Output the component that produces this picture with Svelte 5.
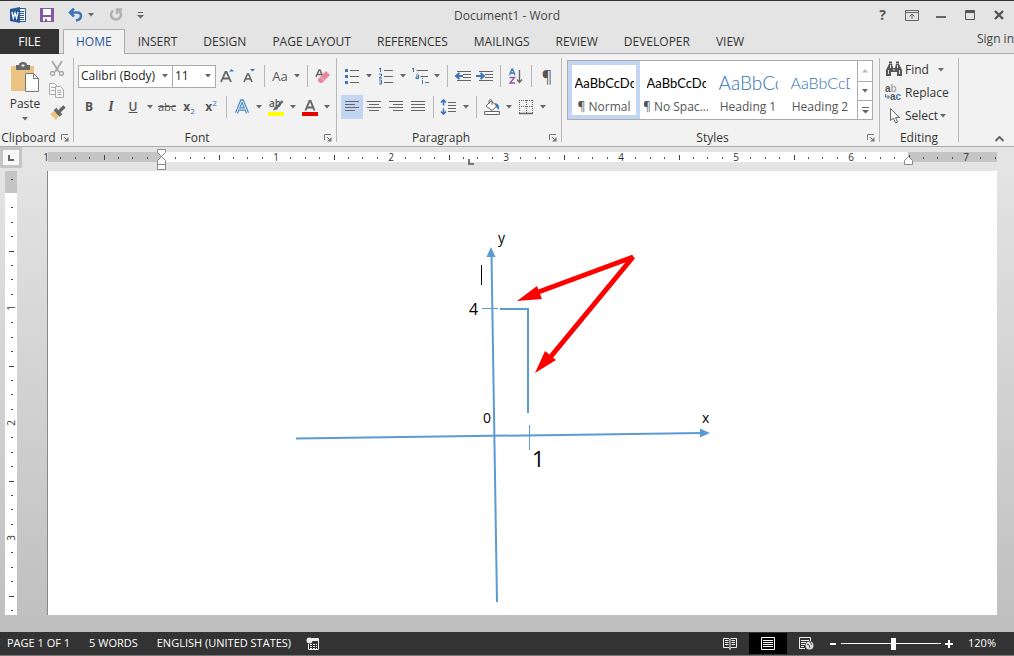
<script lang="ts">
	const tabs = [
		'INSERT',
		'DESIGN',
		'PAGE LAYOUT',
		'REFERENCES',
		'MAILINGS',
		'REVIEW',
		'DEVELOPER',
		'VIEW',
	];

	const styles = [
		{ name: '¶ Normal', sample: 'AaBbCcDc', kind: 'body' },
		{ name: '¶ No Spac...', sample: 'AaBbCcDc', kind: 'body' },
		{ name: 'Heading 1', sample: 'AaBbCc', kind: 'h1' },
		{ name: 'Heading 2', sample: 'AaBbCcD', kind: 'h2' },
	];

	let activeTab = $state('HOME');
	let activeStyle = $state('¶ Normal');
	let align = $state('left');
	let zoom = $state(53);

	// one inch on the ruler at 120% zoom, split in eighths
	const inch = 115;

	function ticks(from: number, to: number) {
		const list: Array<{ pos: number; kind: string; label: string }> = [];
		for (let i = from; i <= to; i++) {
			if (i === 0) continue;
			const kind = i % 8 === 0 ? 'number' : i % 4 === 0 ? 'half' : 'dot';
			list.push({ pos: Math.round((i * inch) / 8), kind, label: String(Math.abs(i / 8)) });
		}
		return list;
	}

	const hTicks = ticks(-8, 58);
	const vTicks = ticks(-1, 29);
</script>

{#snippet caret()}
	<svg class="caret" width="6" height="4" viewBox="0 0 6 4"><path d="M0 0h6L3 3.5z" fill="#666" /></svg>
{/snippet}

{#snippet drop(label: string)}
	<button class="drop" aria-label={label}>{@render caret()}</button>
{/snippet}

{#snippet groupLabel(label: string, launcher: boolean)}
	<div class="group-label">
		<span>{label}</span>
		{#if launcher}
			<button class="launcher" aria-label="{label} settings">
				<svg width="8" height="8" viewBox="0 0 8 8" fill="none" stroke="#777">
					<path d="M.5 6V.5H7M3 3l3 3" />
					<path d="M7.5 3v4.500H3z" fill="#777" stroke="none" />
				</svg>
			</button>
		{/if}
	</div>
{/snippet}

{#snippet icon(name: string)}
	<svg width="18" height="18" viewBox="0 0 18 18" fill="none" stroke="#666" aria-hidden="true">
		{#if name === 'grow'}
			<path d="M3 15L7.500 5h1L13 15M5 11.500h6" stroke-width="1.800" />
			<path d="M11 4.500h5L13.500 2z" fill="#3f73b5" stroke="none" />
		{:else if name === 'shrink'}
			<path d="M4 15l3.500-8h1L12 15M5.500 12h5" stroke-width="1.700" />
			<path d="M10 2h5l-2.500 2.500z" fill="#3f73b5" stroke="none" />
		{:else if name === 'clear'}
			<path d="M2 10l3-7h1l3 7M3.500 7.500h4" stroke-width="1.500" />
			<path d="M4 12l8-8 4 4-8 8H6l-2-2z" fill="#e8879b" stroke="none" />
			<path d="M6.500 9.500l4 4" stroke="#f6d0d8" />
		{:else if name === 'effects'}
			<path d="M3.500 15L8.500 3h1l5 12M5.500 11h7" stroke="#b7d3ee" stroke-width="4" />
			<path d="M3.500 15L8.500 3h1l5 12M5.500 11h7" stroke="#3d7ab8" stroke-width="2.800" />
			<path d="M3.500 15L8.500 3h1l5 12M5.500 11h7" stroke="#fff" />
		{:else if name === 'highlight'}
			<path d="M8.500 11l7-8" stroke-width="2.500" />
			<path d="M6 12.500l2-4 3 2.500z" fill="#666" stroke="none" />
			<path d="M1 14h16v4H1z" fill="#ffff00" stroke="none" />
		{:else if name === 'color'}
			<path d="M4.500 12.500L8.500 3h1l4 9.500M6 9.500h6" stroke-width="1.900" />
			<path d="M1 14h16v4H1z" fill="#e80000" stroke="none" />
		{:else if name === 'bullets'}
			<path d="M7 3.500h9M7 9.500h9M7 15.500h9" />
			<path d="M2 3.500h3M2 9.500h3M2 15.500h3" stroke="#3f73b5" stroke-width="3" />
		{:else if name === 'numbers'}
			<path d="M7 3.500h9M7 9.500h9M7 15.500h9" />
			<path d="M2 2l1.500-1v4M2 7h2.500v2L2 11h3M2 13h2.500v4H2M2.500 15h2" stroke="#3f73b5" />
		{:else if name === 'multi'}
			<path d="M5.500 3.500H17M9.500 9.500H17M14 15.500h4" />
			<path d="M1 2l1.500-1v4M5 8h2.500v3.500H5V10h2M11.500 13v4M11.500 11v1" stroke="#3f73b5" />
		{:else if name === 'outdent' || name === 'indent'}
			<path d="M3 4.500h14M9 7.500h8M9 10.500h8M3 13.500h14" />
			{#if name === 'outdent'}
				<path d="M9 9H3M5.500 6L2 9l3.500 3" stroke="#3f73b5" stroke-width="2" />
			{:else}
				<path d="M0 9h6M4.500 6L8 9l-3.500 3" stroke="#3f73b5" stroke-width="2" />
			{/if}
		{:else if name === 'sort'}
			<path d="M2.500 8L5 2h.5L8 8M3.500 6h4" stroke="#3f73b5" stroke-width="1.300" />
			<path d="M2.500 10.500h5L3 16h5" stroke="#8e5ba8" stroke-width="1.400" />
			<path d="M12.500 3v12M10 12.500l2.500 3 2.500-3" stroke-width="1.300" />
		{:else if name === 'left'}
			<path d="M2 3.500h14M2 6.500h10M2 9.500h14M2 12.500h10" />
		{:else if name === 'center'}
			<path d="M2 3.500h14M4 6.500h10M2 9.500h14M4 12.500h10" />
		{:else if name === 'right'}
			<path d="M2 3.500h14M6 6.500h10M2 9.500h14M6 12.500h10" />
		{:else if name === 'justify'}
			<path d="M2 3.500h14M2 6.500h14M2 9.500h14M2 12.500h14" />
		{:else if name === 'spacing'}
			<path d="M8 4.500h8M8 7.500h8M8 10.500h8M8 13.500h8" />
			<path d="M3.500 2v5.500M3.500 10.500V16M1 4.500L3.500 2 6 4.500M1 13.500L3.500 16 6 13.500" stroke="#3f73b5" stroke-width="1.600" />
		{:else if name === 'shading'}
			<path d="M3 8l5-5 6 5-5 4.500z" fill="#fff" />
			<path d="M6 6V2.500Q7.500.5 9 2.500V7" />
			<path d="M12 5q5 1 4 7l-3-3z" fill="#3f73b5" stroke="none" />
			<path d="M1.500 13.500h15v3h-15z" fill="#fff" />
		{:else if name === 'borders'}
			<path d="M2.500 2v13M9.500 2v13M15.500 2v13M2 2.500h14M2 8.500h14" stroke-dasharray="1 1" />
			<path d="M2 15.500h14" stroke-width="1.500" />
		{:else if name === 'cut'}
			<g stroke="#a8a8a8" stroke-width="1.800">
				<path d="M4 1l7 11M14 1L7 12" />
				<circle cx="4.500" cy="13.500" r="2" stroke-width="1.300" />
				<circle cx="13.500" cy="13.500" r="2" stroke-width="1.300" />
			</g>
		{:else if name === 'copy'}
			<g stroke="#aaa" fill="#f6f6f6">
				<path d="M1.500 1.500h5l3 3v8h-8z" />
				<path d="M7.500 4.500h5l3 3v8h-8z" />
				<path d="M3 5.500h4M3 8.500h4M9.500 8.500h4M9.500 10.500h4M9.500 12.500h4" />
			</g>
		{:else if name === 'painter'}
			<path d="M2 10l5-3.500 4.500 5L8 16z" fill="#eac282" stroke="none" />
			<path d="M7 5l6 6.500M12 6.500l4.500-4" stroke-width="3.500" />
			<path d="M9 10l4-4" stroke-width="2.500" />
		{:else if name === 'find'}
			<path d="M1 15V9l3-6h3l1 4h2l1-4h3l3 6v6h-5v-4H6v4z" fill="#555" stroke="none" />
			<path d="M4 1.500h3M11 1.500h3" stroke="#555" stroke-width="2" />
			<path d="M3.500 9v4M14.500 9v4M8 9h2M5.500 4v3M12.500 4v3" stroke="#ddd" />
		{:else if name === 'select'}
			<path d="M5.500 1.500v12l3-2.500 2 5 2-1-2-4.500h4z" fill="#fff" />
		{/if}
	</svg>
{/snippet}

<div class="word">
	<header class="title-bar">
		<div class="quick">
			<svg width="16" height="16" viewBox="0 0 16 16" aria-label="Word">
				<path d="M8 1.500h7.500v13H8z" fill="#fff" stroke="#2b579a" />
				<path d="M10 4.500h4M10 6.500h4M10 8.500h4M10 10.500h4M10 12.500h4" stroke="#2b579a" />
				<path d="M0 2l10-2v16L0 14z" fill="#2b579a" />
				<path d="M2 5l1.300 6L5 6l1.500 5L8 5" fill="none" stroke="#fff" stroke-width="1.300" />
			</svg>
			<button aria-label="Save">
				<svg width="14" height="14" viewBox="0 0 14 14">
					<path d="M0 0h14v14H0z" fill="#8558a5" />
					<path d="M3 1h8v6H3zM3 9h8v4H7v-2H5v2H3z" fill="#fff" />
				</svg>
			</button>
			<button aria-label="Undo">
				<svg width="15" height="14" viewBox="0 0 15 14" fill="none" stroke="#3f73b5" stroke-width="2.500">
					<path d="M2 4.500h7q4 0 4 3.500t-5 4.500M6 .5L2 4.500l4 4" />
				</svg>
			</button>
			{@render drop('Undo history')}
			<button class="redo" aria-label="Repeat">
				<svg width="14" height="14" viewBox="0 0 14 14" fill="none" stroke="#b0b0b0" stroke-width="2.500">
					<path d="M4 2.500a5 5 0 1 0 6 0M8 6V1.500h5" />
				</svg>
			</button>
			<button class="customize" aria-label="Customize Quick Access Toolbar">
				<svg width="7" height="7" viewBox="0 0 7 7" fill="#666"><path d="M1 0h5v1H1zM0 3h7L3.500 6.500z" /></svg>
			</button>
		</div>
		<div class="doc-title">Document1 - Word</div>
		<div class="window-buttons">
			<button class="help" aria-label="Help">?</button>
			<button aria-label="Ribbon Display Options">
				<svg width="14" height="11" viewBox="0 0 14 11" fill="none" stroke="#666">
					<path d="M.5.5h13v10H.5zM1 2.500h12M7 9V4.500M4.500 6.500L7 4l2.500 2.500" />
				</svg>
			</button>
			<button aria-label="Minimize">
				<svg width="10" height="10" viewBox="0 0 10 10"><path d="M0 6h10v2H0z" fill="#666" /></svg>
			</button>
			<button aria-label="Maximize">
				<svg width="10" height="10" viewBox="0 0 10 10" fill="none" stroke="#555">
					<path d="M.5.5h9v9h-9zM0 1.500h10M0 2.500h10" />
				</svg>
			</button>
			<button aria-label="Close">
				<svg width="10" height="10" viewBox="0 0 10 10" stroke="#555" stroke-width="2.400"><path d="M1 1l8 8M9 1L1 9" /></svg>
			</button>
		</div>
	</header>

	<nav class="tabs">
		<button class="file">FILE</button>
		<button class="tab" class:active={activeTab === 'HOME'} onclick={() => (activeTab = 'HOME')}>HOME</button>
		{#each tabs as tab}
			<button class="tab" class:active={activeTab === tab} onclick={() => (activeTab = tab)}>{tab}</button>
		{/each}
		<a class="sign-in" href="#signin">Sign in</a>
	</nav>

	<div class="ribbon">
		<section class="group clipboard">
			<div class="group-body">
				<button class="paste">
					<svg width="30" height="31" viewBox="0 0 30 31">
						<path d="M1 4h23v25H1z" fill="#eac282" />
						<path d="M6 3h3q0-3 4-3t4 3h3v5H6z" fill="#666" />
						<path d="M11.500 2.500h3v2h-3z" fill="#eee" />
						<path d="M15.500 11.500h8l5 5v13h-13z" fill="#fff" stroke="#777" />
						<path d="M23.500 11.500v5h5" fill="none" stroke="#777" />
					</svg>
					<span>Paste</span>
					{@render caret()}
				</button>
				<div class="clip-tools">
					<button class="tool" aria-label="Cut">{@render icon('cut')}</button>
					<button class="tool" aria-label="Copy">{@render icon('copy')}</button>
					<button class="tool" aria-label="Format Painter">{@render icon('painter')}</button>
				</div>
			</div>
			{@render groupLabel('Clipboard', true)}
		</section>

		<section class="group font">
			<div class="group-body rows">
				<div class="row">
					<span class="combo family">
						<select aria-label="Font"><option>Calibri (Body)</option></select>
						{@render caret()}
					</span>
					<span class="combo size">
						<select aria-label="Font Size"><option>11</option></select>
						{@render caret()}
					</span>
					<button class="tool" aria-label="Increase Font Size">{@render icon('grow')}</button>
					<button class="tool" aria-label="Decrease Font Size">{@render icon('shrink')}</button>
					<i class="sep"></i>
					<button class="tool case" aria-label="Change Case">Aa</button>
					{@render drop('Case options')}
					<i class="sep"></i>
					<button class="tool" aria-label="Clear All Formatting">{@render icon('clear')}</button>
				</div>
				<div class="row">
					<button class="tool"><b>B</b></button>
					<button class="tool italic">I</button>
					<button class="tool underline">U</button>
					{@render drop('Underline style')}
					<button class="tool strike">abc</button>
					<button class="tool script"><b>x</b><sub>2</sub></button>
					<button class="tool script"><b>x</b><sup>2</sup></button>
					<i class="sep"></i>
					<button class="tool" aria-label="Text Effects">{@render icon('effects')}</button>
					{@render drop('Text effect options')}
					<button class="tool mark" aria-label="Text Highlight Color">
						<span>ab</span>
						{@render icon('highlight')}
					</button>
					{@render drop('Highlight colors')}
					<button class="tool" aria-label="Font Color">{@render icon('color')}</button>
					{@render drop('Font colors')}
				</div>
			</div>
			{@render groupLabel('Font', true)}
		</section>

		<section class="group paragraph">
			<div class="group-body rows">
				<div class="row">
					<button class="tool" aria-label="Bullets">{@render icon('bullets')}</button>
					{@render drop('Bullet library')}
					<button class="tool" aria-label="Numbering">{@render icon('numbers')}</button>
					{@render drop('Numbering library')}
					<button class="tool" aria-label="Multilevel List">{@render icon('multi')}</button>
					{@render drop('List library')}
					<i class="sep"></i>
					<button class="tool" aria-label="Decrease Indent">{@render icon('outdent')}</button>
					<button class="tool" aria-label="Increase Indent">{@render icon('indent')}</button>
					<i class="sep"></i>
					<button class="tool" aria-label="Sort">{@render icon('sort')}</button>
					<i class="sep"></i>
					<button class="tool pilcrow" aria-label="Show paragraph marks">¶</button>
				</div>
				<div class="row">
					{#each ['left', 'center', 'right', 'justify'] as a}
						<button class="tool" class:on={align === a} aria-label="Align {a}" onclick={() => (align = a)}>
							{@render icon(a)}
						</button>
					{/each}
					<i class="sep"></i>
					<button class="tool" aria-label="Line Spacing">{@render icon('spacing')}</button>
					{@render drop('Spacing options')}
					<i class="sep"></i>
					<button class="tool" aria-label="Shading">{@render icon('shading')}</button>
					{@render drop('Shading colors')}
					<button class="tool" aria-label="Borders">{@render icon('borders')}</button>
					{@render drop('Border options')}
				</div>
			</div>
			{@render groupLabel('Paragraph', true)}
		</section>

		<section class="group styles">
			<div class="group-body">
				<div class="gallery">
					{#each styles as s}
						<button class="style" class:chosen={activeStyle === s.name} onclick={() => (activeStyle = s.name)}>
							<span class="sample {s.kind}">{s.sample}</span>
							<span class="style-name">{s.name}</span>
						</button>
					{/each}
					<div class="scroller">
						<button class="dim" aria-label="Previous styles">
							<svg width="6" height="4" viewBox="0 0 6 4"><path d="M0 3.500h6L3 0z" fill="#bbb" /></svg>
						</button>
						<button aria-label="Next styles">{@render caret()}</button>
						<button aria-label="More styles">
							<svg width="7" height="7" viewBox="0 0 7 7" fill="#666"><path d="M0 0h7v1H0zM0 3h7L3.500 6.500z" /></svg>
						</button>
					</div>
				</div>
			</div>
			{@render groupLabel('Styles', true)}
		</section>

		<section class="group editing">
			<div class="group-body edit-list">
				<button>{@render icon('find')}<span class="wide">Find</span>{@render caret()}</button>
				<button>
					<span class="swap" aria-hidden="true">
						<span>a<i>b</i></span>
						<span class="to">
							<svg width="5" height="6" viewBox="0 0 5 6" fill="none" stroke="#3f73b5"><path d="M.5 0v3H4M2.500 1L4.500 3l-2 2" /></svg>
							a<em>c</em>
						</span>
					</span>
					<span>Replace</span>
				</button>
				<button>{@render icon('select')}<span>Select</span>{@render caret()}</button>
			</div>
			{@render groupLabel('Editing', false)}
		</section>

		<button class="collapse" aria-label="Collapse the Ribbon">
			<svg width="9" height="6" viewBox="0 0 9 6" fill="none" stroke="#666" stroke-width="2"><path d="M.5 5l4-4 4 4" /></svg>
		</button>
	</div>

	<main class="workspace">
		<div class="corner">
			<button class="tab-stop" aria-label="Left Tab">
				<svg width="6" height="6" viewBox="0 0 6 6"><path d="M0 0h2v4h4v2H0z" fill="#666" /></svg>
			</button>
		</div>
		<div class="h-ruler">
			<svg width="100%" height="24" aria-label="Horizontal ruler">
				<rect x="4" y="5" width="949" height="10" fill="#fff" />
				<rect x="4" y="5" width="113" height="10" fill="#c5c5c5" />
				<rect x="864" y="5" width="89" height="10" fill="#c5c5c5" />
				<g transform="translate(117 10)">
					{#each hTicks as t}
						{#if t.kind === 'number'}
							<text class="mark-no" x={t.pos} y="4">{t.label}</text>
						{:else if t.kind === 'half'}
							<rect x={t.pos} y="-2" width="1" height="5" fill="#444" />
						{:else}
							<rect x={t.pos} y="0" width="1" height="2" fill="#555" />
						{/if}
					{/each}
				</g>
				<g fill="#fff" stroke="#888">
					<path d="M113.500 2.500h8v3l-4 4-4-4zM113.500 17.500v-4l4-4 4 4v4zM113.500 17.500h8v5h-8z" />
					<path d="M860.500 17.500v-4l4-4 4 4v4z" />
				</g>
				<path d="M424 12h2v4h4v2h-6z" fill="#777" />
			</svg>
		</div>
		<div class="v-ruler">
			<svg width="12" height="100%" aria-label="Vertical ruler">
				<rect width="12" height="22" fill="#c5c5c5" />
				<g transform="translate(6 22)">
					{#each vTicks as t}
						{#if t.kind === 'number'}
							<text class="mark-no" transform="translate(4 {t.pos}) rotate(-90)">{t.label}</text>
						{:else if t.kind === 'half'}
							<rect x="-2" y={t.pos} width="5" height="1" fill="#444" />
						{:else}
							<rect x="0" y={t.pos} width="2" height="1" fill="#444" />
						{/if}
					{/each}
				</g>
			</svg>
		</div>
		<div class="page">
			<svg class="drawing" viewBox="0 0 949 444" aria-label="Coordinate axes">
				<g stroke="#5b9bd5" stroke-width="2" fill="none">
					<path d="M248 267.500L654 262" />
					<path d="M443.500 84L449 431" />
					<path d="M452 138h28v104" />
					<path d="M434 137.500h16M481.500 254v25" stroke-width="1" />
				</g>
				<path d="M438.500 86h9L443 76zM652 257.500v9l10-4.500z" fill="#5b9bd5" />
				<g stroke="#f00" stroke-width="5" fill="none" stroke-linejoin="bevel">
					<path d="M485 123L585 86L500 189" />
				</g>
				<path d="M469 130l20-15 5 13zM487 202l10-22 11 9z" fill="#f00" />
				<path d="M433.500 94v20" stroke="#000" />
				<g class="marks">
					<text x="450" y="72">y</text>
					<text x="421" y="144" class="four">4</text>
					<text x="435" y="252">0</text>
					<text x="654" y="252">x</text>
					<text x="484" y="296" class="one">1</text>
				</g>
			</svg>
		</div>
	</main>

	<footer class="status">
		<span>PAGE 1 OF 1</span>
		<span>5 WORDS</span>
		<span>ENGLISH (UNITED STATES)</span>
		<button class="macro" aria-label="Record macro">
			<svg width="14" height="14" viewBox="0 0 14 14">
				<path d="M6 1.500h6.500v11h-10V7" fill="none" stroke="#eee" />
				<path d="M6 2h7v2H6z" fill="#eee" />
				<circle cx="3.500" cy="3.500" r="3" fill="#eee" />
				<path d="M4 7.500h7M4 9.500h7M4 11.500h7" stroke="#eee" stroke-dasharray="2 1" />
			</svg>
		</button>
		<div class="view-buttons">
			<button aria-label="Read Mode">
				<svg width="14" height="13" viewBox="0 0 14 13" fill="none" stroke="#eee">
					<path d="M.5 1.500H6l1 1 1-1h5.500v9H8l-1 1-1-1H.5zM7 2v11M2 3.500h3.500M2 5.500h3.500M2 7.500h3.500M8.500 3.500H12M8.500 5.500H12M8.500 7.500H12" />
				</svg>
			</button>
			<button class="current" aria-label="Print Layout">
				<svg width="14" height="13" viewBox="0 0 14 13" fill="none" stroke="#fff">
					<path d="M.5.5h13v12H.5zM2 3.500h10M2 5.500h10M2 7.500h10M2 9.500h10" />
				</svg>
			</button>
			<button aria-label="Web Layout">
				<svg width="15" height="13" viewBox="0 0 15 13" fill="none" stroke="#eee">
					<path d="M6 11.500H.5V.5h11V4M2 3.500h8M2 5.500h5M2 7.500h4M2 9.500h3" />
					<circle cx="10.500" cy="8.500" r="4" fill="#ddd" stroke="none" />
					<path d="M8 7l2 1 1 3M11 5l2 3" stroke="#555" />
				</svg>
			</button>
		</div>
		<div class="zoom">
			<button aria-label="Zoom Out">
				<svg width="8" height="8" viewBox="0 0 8 8"><path d="M1 3h6v2H1z" fill="#fff" /></svg>
			</button>
			<input type="range" min="0" max="100" bind:value={zoom} aria-label="Zoom" />
			<button aria-label="Zoom In">
				<svg width="8" height="8" viewBox="0 0 8 8"><path d="M0 3h3V0h2v3h3v2H5v3H3V5H0z" fill="#fff" /></svg>
			</button>
		</div>
		<span class="percent">120%</span>
	</footer>
</div>

<style>
	:global(body) {
		background: #8c8c8c;
	}
	.word {
		display: flex;
		flex-direction: column;
		min-height: 100vh;
		box-sizing: border-box;
		border-top: 1px solid #333;
		border-bottom: 1px solid #777;
		background: linear-gradient(#e4e4e4 25%, #bdbdbd);
		font-family: 'Open Sans', 'Noto Sans', sans-serif;
		font-size: 12px;
		line-height: 16px;
		color: #333;
		overflow: hidden;
	}
	button {
		display: flex;
		align-items: center;
		justify-content: center;
		padding: 0;
		border: none;
		background: none;
		color: inherit;
		font: inherit;
		white-space: nowrap;
	}
	svg {
		display: block;
		flex: none;
	}

	.title-bar {
		display: grid;
		grid-template-columns: 1fr auto 1fr;
		align-items: center;
		height: 28px;
		background: #e4e4e4;
	}
	.quick {
		display: flex;
		align-items: center;
		padding-left: 10px;
	}
	.quick > button {
		margin-left: 14px;
	}
	.quick > .drop {
		margin-left: 2px;
	}
	.quick > .redo {
		margin-left: 12px;
	}
	.doc-title {
		padding-top: 2px;
		color: #444;
	}
	.window-buttons {
		display: flex;
		justify-content: flex-end;
		padding-right: 1px;
	}
	.window-buttons button {
		width: 29px;
		height: 24px;
	}
	.window-buttons .help {
		font-size: 14px;
		font-weight: 700;
		color: #555;
	}

	.tabs {
		display: flex;
		height: 25px;
		background: #e4e4e4;
		box-shadow: inset 0 -1px #ababab;
	}
	.file {
		width: 59px;
		margin-right: 4px;
		background: #333;
		color: #fff;
	}
	.tab {
		padding: 0 13px;
	}
	.tab.active {
		padding: 0 12px;
		border: 1px solid #ababab;
		border-bottom: none;
		background: #f2f2f2;
		color: #2b579a;
	}
	.sign-in {
		margin-left: auto;
		line-height: 20px;
		color: #444;
		text-decoration: none;
		white-space: nowrap;
	}

	.ribbon {
		display: flex;
		height: 92px;
		background: #f2f2f2;
		border-bottom: 1px solid #ababab;
	}
	/* the divider stops short of the ribbon's lower edge */
	.group {
		display: flex;
		flex-direction: column;
		flex: none;
		box-sizing: border-box;
		margin-top: 4px;
		padding-right: 1px;
		background: linear-gradient(#b8b8b8, #b8b8b8) right top / 1px 84px no-repeat;
	}
	.clipboard {
		width: 74px;
	}
	.font {
		width: 263px;
	}
	.paragraph {
		width: 225px;
	}
	.styles {
		width: 318px;
	}
	.editing {
		width: 79px;
	}
	.group-body {
		display: flex;
		flex: 1;
	}
	.group-label {
		display: flex;
		align-items: center;
		height: 16px;
	}
	.group-label span {
		flex: 1;
		text-align: center;
	}
	.launcher {
		width: 16px;
		height: 16px;
	}
	.rows {
		flex-direction: column;
		gap: 7px;
		padding: 6px 0 0 4px;
	}
	.row {
		display: flex;
		align-items: center;
		height: 24px;
	}
	.tool {
		width: 22px;
		height: 24px;
		color: #555;
	}
	.tool.on {
		background: #c2d5f2;
	}
	.drop {
		width: 12px;
		height: 24px;
	}
	.sep {
		width: 1px;
		height: 22px;
		margin: 0 4px;
		background: #b8b8b8;
	}

	.paste {
		flex-direction: column;
		justify-content: flex-start;
		width: 46px;
		padding: 4px 0 0 4px;
	}
	.paste span {
		margin: 3px 0 5px;
	}
	.clip-tools .tool {
		height: 22px;
	}

	.combo {
		display: grid;
		align-items: center;
		box-sizing: border-box;
		height: 23px;
		border: 1px solid #ababab;
		background: #fff;
	}
	.combo select,
	.combo :global(.caret) {
		grid-area: 1 / 1;
	}
	.combo :global(.caret) {
		justify-self: end;
		margin-right: 4px;
		pointer-events: none;
	}
	.combo select {
		appearance: none;
		width: 100%;
		padding: 0 2px;
		border: none;
		background: none;
		color: #222;
		font: inherit;
	}
	.family {
		width: 95px;
	}
	.size {
		width: 43px;
		border-left: none;
	}
	.case {
		font-size: 13px;
	}
	.italic {
		font-family: 'Liberation Serif', serif;
		font-size: 14px;
		font-style: italic;
		font-weight: 700;
	}
	.underline {
		font-weight: 600;
		text-decoration: underline;
	}
	.strike {
		font-size: 11px;
		text-decoration: line-through;
	}
	.script sub,
	.script sup {
		font-size: 8px;
		line-height: 8px;
		color: #3f73b5;
	}
	.script sub {
		align-self: flex-end;
		margin-bottom: 4px;
	}
	.script sup {
		align-self: flex-start;
		margin-top: 4px;
	}
	.mark {
		display: grid;
		place-items: center;
	}
	.mark span,
	.mark :global(svg) {
		grid-area: 1 / 1;
	}
	.mark span {
		place-self: start;
		font-size: 10px;
		font-weight: 600;
		padding-left: 2px;
	}
	.pilcrow {
		font-size: 16px;
	}

	.gallery {
		display: flex;
		box-sizing: border-box;
		height: 60px;
		margin: 2px 0 0 5px;
		border: 1px solid #ababab;
		background: #fff;
	}
	.style {
		flex-direction: column;
		justify-content: flex-end;
		gap: 4px;
		box-sizing: border-box;
		width: 72px;
		border: 4px solid transparent;
		overflow: hidden;
	}
	.style.chosen {
		border-color: #c2d5f2;
	}
	.sample {
		width: 59px;
		height: 24px;
		line-height: 24px;
		overflow: hidden;
		text-align: left;
		font-family: Lato, 'Open Sans', sans-serif;
		font-size: 13px;
		color: #000;
	}
	.sample.h1 {
		font-size: 19px;
		font-weight: 300;
		color: #2e74b5;
	}
	.sample.h2 {
		font-size: 16px;
		font-weight: 300;
		color: #2e74b5;
	}
	.style-name {
		color: #555;
	}
	.scroller {
		display: grid;
		grid-template-rows: 20px 19px 19px;
		width: 14px;
		margin-left: 1px;
		border-left: 1px solid #ababab;
	}
	.scroller button + button {
		border-top: 1px solid #ababab;
	}

	.edit-list {
		flex-direction: column;
		padding: 0 0 0 5px;
	}
	.edit-list button {
		justify-content: flex-start;
		height: 23px;
		gap: 2px;
	}
	.edit-list .wide {
		width: 31px;
		text-align: left;
	}
	.swap {
		display: flex;
		flex-direction: column;
		width: 18px;
		font-family: 'Liberation Sans', sans-serif;
		font-size: 10px;
		font-weight: 700;
		line-height: 8px;
		color: #555;
		text-align: left;
	}
	.swap i {
		color: #aaa;
		font-style: normal;
	}
	.swap em {
		color: #3f73b5;
		font-style: normal;
	}
	.swap .to {
		display: flex;
		align-items: center;
	}
	.collapse {
		align-self: flex-end;
		width: 30px;
		height: 14px;
		margin-left: auto;
	}

	.workspace {
		display: grid;
		grid-template-columns: 44px 1fr;
		grid-template-rows: 24px 1fr;
		flex: 1;
		padding-bottom: 17px;
	}
	.tab-stop {
		box-sizing: border-box;
		width: 22px;
		height: 21px;
		border: 3px solid #c5c5c5;
		background: #f8f8f8;
	}
	.mark-no {
		font-size: 10px;
		text-anchor: middle;
		fill: #333;
	}
	.v-ruler {
		width: 12px;
		margin-left: 5px;
		background: #fff;
		contain: size;
		height: 100%;
	}
	.page {
		display: flex;
		margin: 0 17px 0 3px;
		border-left: 1px solid #888;
		background: #fff;
	}
	.drawing {
		flex: 1;
		width: 100%;
		min-width: 0;
	}
	.marks {
		font-size: 14px;
		fill: #000;
	}
	.marks .four {
		font-size: 16px;
	}
	.marks .one {
		font-size: 22px;
	}

	.status {
		display: flex;
		align-items: center;
		gap: 19px;
		height: 23px;
		padding: 0 18px 0 7px;
		background: #333;
		color: #fff;
		font-size: 11px;
		white-space: nowrap;
	}
	.status > span {
		padding-bottom: 2px;
	}
	.macro {
		margin-left: -4px;
	}
	.view-buttons {
		display: flex;
		margin-left: auto;
	}
	.view-buttons button {
		width: 38px;
		height: 21px;
	}
	.view-buttons .current {
		background: #000;
	}
	.zoom {
		display: flex;
		align-items: center;
		gap: 4px;
		margin-left: -15px;
	}
	.zoom input {
		appearance: none;
		width: 100px;
		height: 12px;
		margin: 0;
		background: linear-gradient(#fff, #fff) center / 100% 1px no-repeat;
	}
	.zoom input::-webkit-slider-thumb {
		appearance: none;
		width: 5px;
		height: 12px;
		background: #fff;
	}
	.percent {
		margin-left: -4px;
	}
</style>
